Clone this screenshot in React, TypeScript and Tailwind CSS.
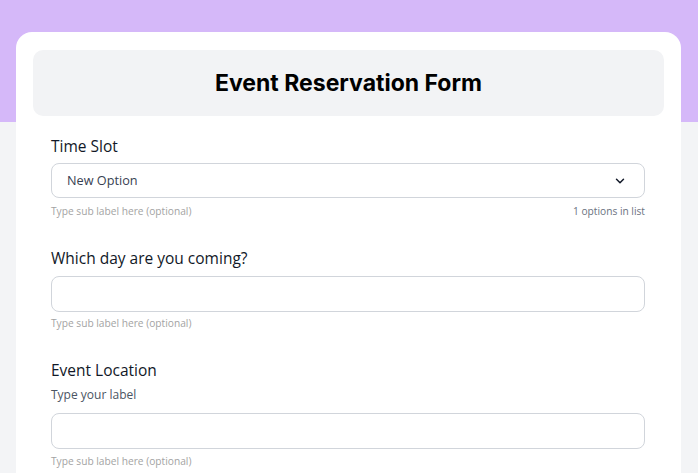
import React from 'react';
import { ChevronDown } from 'lucide-react';

const font = { fontFamily: '"Open Sans", "Noto Sans", sans-serif' };

const SubLabel: React.FC<{ right?: string; gap: string }> = ({ right, gap }) => (
  <div className={`${gap} flex items-center justify-between text-[10.2px] leading-4`}>
    <span className="text-[#a3a3a3]">Type sub label here (optional)</span>
    {right && <span className="text-[#6b7280]">{right}</span>}
  </div>
);

type FieldProps = {
  label: string;
  sub?: string;
  right?: string;
  top: string;
  controlGap: string;
  subGap: string;
  children: React.ReactNode;
};

const Field: React.FC<FieldProps> = ({ label, sub, right, top, controlGap, subGap, children }) => (
  <div className={top}>
    <label className="block text-[15.5px] leading-6 text-[#111827]">{label}</label>
    {sub && <div className="mt-[3px] text-[12px] leading-5 text-[#4b5563]">{sub}</div>}
    <div className={controlGap}>{children}</div>
    <SubLabel right={right} gap={subGap} />
  </div>
);

export default function App() {
  return (
    <div
      className="min-h-screen bg-[linear-gradient(to_bottom,#d5b8f9_122px,#f3f4f6_122px)] pl-4 pr-[17px] pt-8"
      style={font}
    >
      <div className="rounded-2xl bg-white px-[17px] pb-6 pt-[18px]">
        <div className="flex h-[66px] items-center justify-center rounded-[10px] bg-[#f2f3f5]">
          <h1
            className="text-[23px] font-bold text-black"
            style={{ fontFamily: 'Inter, "Noto Sans", sans-serif' }}
          >
            Event Reservation Form
          </h1>
        </div>

        <div className="pl-[18px] pr-[19px]">
          <Field label="Time Slot" right="1 options in list" top="mt-[18px]" controlGap="mt-[5px]" subGap="mt-[5px]">
            <div className="flex h-[35px] items-center justify-between rounded-lg border border-[#d1d5db] px-[15px]">
              <span className="text-[12.7px] font-medium text-[#374151]">New Option</span>
              <ChevronDown size={14} strokeWidth={2.5} className="mr-[2px] text-[#111827]" />
            </div>
          </Field>

          <Field label="Which day are you coming?" top="mt-[27px]" controlGap="mt-[6px]" subGap="mt-[3px]">
            <input className="block h-[36px] w-full rounded-lg border border-[#d1d5db] px-4 outline-none" />
          </Field>

          <Field label="Event Location" sub="Type your label" top="mt-[27px]" controlGap="mt-[8px]" subGap="mt-[4px]">
            <input className="block h-[36px] w-full rounded-lg border border-[#d1d5db] px-4 outline-none" />
          </Field>
        </div>
      </div>
    </div>
  );
}
